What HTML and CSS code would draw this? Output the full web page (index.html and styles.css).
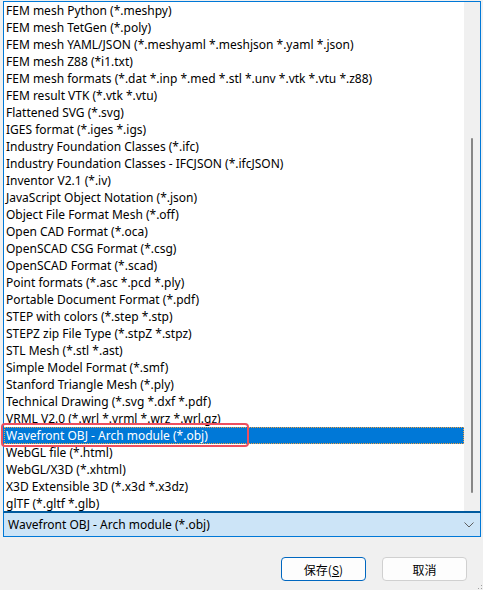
FILE: index.html
```html
<!DOCTYPE html>
<html>
<head>
<meta charset="utf-8">
<link rel="stylesheet" href="styles.css">
</head>
<body>
<div class="page">
  <div class="listbox">
    <ul class="items">
      <li>FEM mesh Python (*.meshpy)</li>
      <li>FEM mesh TetGen (*.poly)</li>
      <li>FEM mesh YAML/JSON (*.meshyaml *.meshjson *.yaml *.json)</li>
      <li>FEM mesh Z88 (*i1.txt)</li>
      <li>FEM mesh formats (*.dat *.inp *.med *.stl *.unv *.vtk *.vtu *.z88)</li>
      <li>FEM result VTK (*.vtk *.vtu)</li>
      <li>Flattened SVG (*.svg)</li>
      <li>IGES format (*.iges *.igs)</li>
      <li>Industry Foundation Classes (*.ifc)</li>
      <li>Industry Foundation Classes - IFCJSON (*.ifcJSON)</li>
      <li>Inventor V2.1 (*.iv)</li>
      <li>JavaScript Object Notation (*.json)</li>
      <li>Object File Format Mesh (*.off)</li>
      <li>Open CAD Format (*.oca)</li>
      <li>OpenSCAD CSG Format (*.csg)</li>
      <li>OpenSCAD Format (*.scad)</li>
      <li>Point formats (*.asc *.pcd *.ply)</li>
      <li>Portable Document Format (*.pdf)</li>
      <li>STEP with colors (*.step *.stp)</li>
      <li>STEPZ zip File Type (*.stpZ *.stpz)</li>
      <li>STL Mesh (*.stl *.ast)</li>
      <li>Simple Model Format (*.smf)</li>
      <li>Stanford Triangle Mesh (*.ply)</li>
      <li>Technical Drawing (*.svg *.dxf *.pdf)</li>
      <li>VRML V2.0 (*.wrl *.vrml *.wrz *.wrl.gz)</li>
      <li class="selected">Wavefront OBJ - Arch module (*.obj)</li>
      <li>WebGL file (*.html)</li>
      <li>WebGL/X3D (*.xhtml)</li>
      <li>X3D Extensible 3D (*.x3d *.x3dz)</li>
      <li>glTF (*.gltf *.glb)</li>
    </ul>
    <div class="scrollbar"><div class="thumb"></div></div>
  </div>
  <div class="combo">
    <span class="combo-text">Wavefront OBJ - Arch module (*.obj)</span>
    <svg class="chevron" width="10" height="6" viewBox="0 0 10 6"><path d="M0.5 0.5 L5 5 L9.5 0.5" fill="none" stroke="#5f5f5f" stroke-width="1"/></svg>
  </div>
  <div class="buttons">
    <button class="btn primary">保存(<u>S</u>)</button>
    <button class="btn">取消</button>
  </div>
  <div class="highlight"></div>
  <div class="grip">
    <i></i><i></i><i></i>
  </div>
</div>
</body>
</html>
```
FILE: styles.css
```css
html, body {
  margin: 0;
  padding: 0;
  background: #f0f0f0;
}
.page {
  position: relative;
  width: 483px;
  height: 590px;
  padding-top: 1px;
  box-sizing: border-box;
  font-family: "Noto Sans", "Noto Sans CJK SC", sans-serif;
  font-size: 12px;
  color: #000;
}
.listbox {
  margin-left: 3px;
  width: 478px;
  height: 512px;
  box-sizing: border-box;
  border: 1px solid #0078d7;
  border-bottom: 2px solid #005a9e;
  background: #fff;
  display: flex;
}
.items {
  list-style: none;
  margin: 0;
  padding: 0;
  flex: 1;
}
.items li {
  height: 17px;
  line-height: 17px;
  padding-left: 2px;
  white-space: nowrap;
  overflow: hidden;
  box-sizing: border-box;
}
.items li.selected {
  background: #0078d7;
  color: #fff;
  border: 1px dotted #f0a040;
  line-height: 15px;
  padding-left: 1px;
}
.scrollbar {
  width: 16px;
  background: #f0f0f0;
  position: relative;
}
.thumb {
  position: absolute;
  left: 7px;
  top: 136px;
  width: 2px;
  height: 355px;
  background: #868686;
  border-radius: 1px;
}
.combo {
  margin-left: 3px;
  width: 478px;
  height: 24px;
  box-sizing: border-box;
  border: 1px solid #0078d7;
  border-top: none;
  background: #cce4f7;
  display: flex;
  align-items: center;
  justify-content: space-between;
  padding: 0 6px 0 4px;
}
.chevron {
  display: block;
}
.buttons {
  display: flex;
  justify-content: flex-end;
  gap: 16px;
  padding: 20px 16px 0 0;
}
.btn {
  width: 85px;
  height: 24px;
  box-sizing: border-box;
  border: 1px solid #d0d0d0;
  border-radius: 4px;
  background: #fdfdfd;
  font-family: "Noto Sans CJK SC", sans-serif;
  font-size: 12px;
  color: #000;
  padding: 0;
}
.btn.primary {
  border-color: #0067c0;
  background: #fdfdfd;
}
.highlight {
  position: absolute;
  left: 1px;
  top: 423px;
  width: 248px;
  height: 24px;
  box-sizing: border-box;
  border: 2px solid #ee4f5e;
  border-radius: 4px;
}
.grip {
  position: absolute;
  right: 1px;
  bottom: 1px;
  width: 6px;
  height: 6px;
}
.grip i {
  position: absolute;
  width: 1px;
  height: 1px;
  background: #a0a0a0;
}
.grip i:nth-child(1) { right: 0; bottom: 0; }
.grip i:nth-child(2) { right: 3px; bottom: 0; }
.grip i:nth-child(3) { right: 0; bottom: 3px; }
```
